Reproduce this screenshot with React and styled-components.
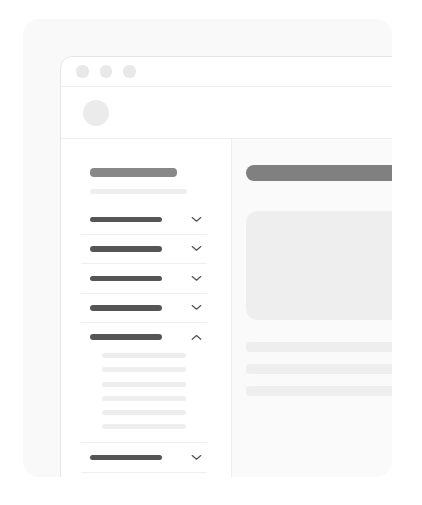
import React from "react";
import styled, { createGlobalStyle } from "styled-components";

const GlobalStyle = createGlobalStyle`
  * { box-sizing: border-box; }
  body {
    margin: 0;
    background: #fff;
    font-family: "Liberation Sans", Arial, sans-serif;
  }
`;

const menu = [
  { id: 1 },
  { id: 2 },
  { id: 3 },
  { id: 4 },
  { id: 5, open: true },
  { id: 6 },
  { id: 7 },
];

function Chevron({ up }) {
  return (
    <svg width="11" height="7" viewBox="0 0 11 7" fill="none">
      <path
        d={up ? "M1.2 5.2 L5.5 1.6 L9.8 5.2" : "M1.2 1.6 L5.5 5.2 L9.8 1.6"}
        stroke="#555"
        strokeWidth="1.3"
        strokeLinecap="round"
        strokeLinejoin="round"
      />
    </svg>
  );
}

export default function App() {
  return (
    <>
      <GlobalStyle />
      <Card>
        <Window>
          <TitleBar>
            <Dot />
            <Dot />
            <Dot />
          </TitleBar>
          <Header>
            <Avatar />
            <HeaderPill />
          </Header>
          <Body>
            <Sidebar>
              <SideTitle />
              <SideSub />
              <MenuList>
                {menu.map((item) => (
                  <MenuItem key={item.id}>
                    <MenuRow $open={item.open}>
                      <MenuBar />
                      <Chevron up={item.open} />
                    </MenuRow>
                    {item.open && (
                      <SubList>
                        {[0, 1, 2, 3, 4, 5].map((i) => (
                          <SubLine key={i} />
                        ))}
                      </SubList>
                    )}
                  </MenuItem>
                ))}
              </MenuList>
            </Sidebar>
            <Main>
              <MainTitle />
              <HeroBox />
              <TextLine />
              <TextLine />
              <TextLine />
            </Main>
          </Body>
        </Window>
      </Card>
    </>
  );
}

const Card = styled.div`
  margin: 19px 0 0 23px;
  width: 369px;
  height: 458px;
  background: #f9f9f9;
  border-radius: 16px;
  overflow: hidden;
  padding: 37px 0 0 37px;
`;

const Window = styled.div`
  width: 420px;
  height: 480px;
  background: #fff;
  border: 1px solid #e6e6e6;
  border-top-left-radius: 12px;
  display: flex;
  flex-direction: column;
`;

const TitleBar = styled.div`
  height: 30px;
  display: flex;
  align-items: center;
  gap: 11px;
  padding-left: 15px;
  border-bottom: 1px solid #eeeeee;
`;

const Dot = styled.span`
  width: 12.5px;
  height: 12.5px;
  border-radius: 50%;
  background: #e8e8e8;
`;

const Header = styled.div`
  height: 52px;
  display: flex;
  align-items: center;
  justify-content: space-between;
  padding-left: 22px;
  border-bottom: 1px solid #eeeeee;
`;

const Avatar = styled.span`
  width: 26px;
  height: 26px;
  border-radius: 50%;
  background: #ebebeb;
`;

const HeaderPill = styled.span`
  width: 120px;
  height: 11px;
  border-radius: 4px;
  background: #ececec;
  margin-right: -33px;
`;

const Body = styled.div`
  flex: 1;
  display: grid;
  grid-template-columns: 171px 1fr;
`;

const Sidebar = styled.aside`
  border-right: 1px solid #eeeeee;
  padding: 29px 0 0 20px;
`;

const SideTitle = styled.div`
  margin-left: 9px;
  width: 87px;
  height: 9px;
  border-radius: 4px;
  background: #888;
`;

const SideSub = styled.div`
  margin: 12px 0 0 9px;
  width: 97px;
  height: 5px;
  border-radius: 3px;
  background: #eeeeee;
`;

const MenuList = styled.ul`
  list-style: none;
  margin: 11px 0 0;
  padding: 0;
  width: 126px;
`;

const MenuItem = styled.li`
  border-bottom: 1px solid #eeeeee;
`;

const MenuRow = styled.div`
  height: ${(p) => (p.$open ? "28px" : "28.5px")};
  display: flex;
  align-items: center;
  justify-content: space-between;
  padding: 0 5.5px 0 8.5px;
`;

const MenuBar = styled.span`
  width: 72px;
  height: 5.5px;
  border-radius: 3px;
  background: #555;
`;

const SubList = styled.div`
  display: flex;
  flex-direction: column;
  gap: 9.3px;
  padding: 2px 0 12.8px 21px;
`;

const SubLine = styled.span`
  width: 84px;
  height: 5px;
  border-radius: 3px;
  background: #eeeeee;
`;

const Main = styled.main`
  background: #fafafa;
  padding: 26px 0 0 14px;
  display: flex;
  flex-direction: column;
`;

const MainTitle = styled.div`
  height: 16px;
  border-radius: 8px;
  background: #808080;
`;

const HeroBox = styled.div`
  margin-top: 30px;
  height: 109px;
  border-radius: 12px;
  background: #eeeeee;
`;

const TextLine = styled.div`
  margin-top: 12px;
  height: 10px;
  border-radius: 4px;
  background: #eeeeee;
  &:nth-of-type(3) {
    margin-top: 22px;
  }
`;
